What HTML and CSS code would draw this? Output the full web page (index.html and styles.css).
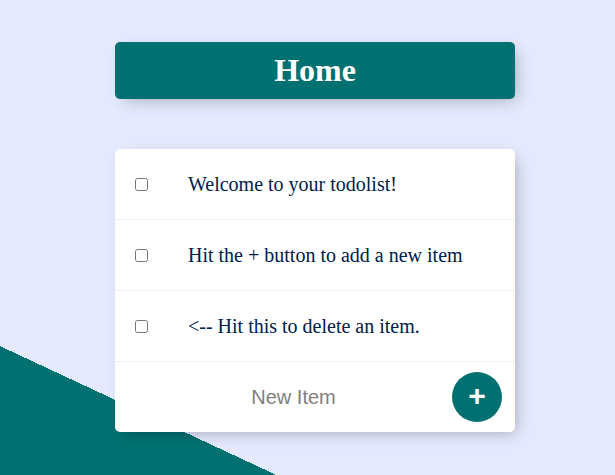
FILE: index.html
```html
<!DOCTYPE html>
<html lang="en">
<head>
<meta charset="utf-8">
<title>To Do List</title>
<link rel="stylesheet" href="styles.css">
</head>
<body>
  <div class="page">
    <div class="box heading">
      <h1 class="title">Home</h1>
    </div>
    <div class="box list">
      <div class="item">
        <input class="check" type="checkbox">
        <p class="text">Welcome to your todolist!</p>
      </div>
      <div class="item">
        <input class="check" type="checkbox">
        <p class="text">Hit the + button to add a new item</p>
      </div>
      <div class="item">
        <input class="check" type="checkbox">
        <p class="text">&lt;-- Hit this to delete an item.</p>
      </div>
      <form class="item new-form">
        <input class="new-input" type="text" name="newItem" placeholder="New Item" autocomplete="off">
        <button class="add-btn" type="button">+</button>
      </form>
    </div>
  </div>
</body>
</html>
```
FILE: styles.css
```css
html {
  background-color: #E4E9FD;
  background-image: linear-gradient(25deg, #007070 50%, #E4E9FD 50%);
  background-size: 615px 979px;
  background-repeat: no-repeat;
  background-position: 0 0;
  font-family: "Liberation Serif", "Times New Roman", serif;
}

body {
  margin: 0;
}

.page {
  padding: 42px 0 0 15px;
}

.box {
  max-width: 400px;
  margin: 0 auto 50px;
  background: #fff;
  border-radius: 5px;
  box-shadow: 5px 5px 15px -5px rgba(0, 0, 0, 0.3);
}

.heading {
  background-color: #007070;
  text-align: center;
}

.title {
  margin: 0;
  padding: 10px;
  color: #fff;
  font-size: 32px;
  font-weight: bold;
}

.item {
  min-height: 70px;
  display: flex;
  align-items: center;
  border-bottom: 1px solid #F1F1F1;
}

.item:last-child {
  border-bottom: 0;
}

.check {
  margin: 20px;
  width: 13px;
  height: 13px;
}

.text {
  margin: 0;
  padding: 20px;
  font-size: 20px;
  font-weight: 200;
  color: #00204a;
}

.new-form {
  margin: 0 0 0 20px;
}

.new-input {
  text-align: center;
  height: 60px;
  border: none;
  background: transparent;
  font-family: "Liberation Sans", Arial, sans-serif;
  font-size: 20px;
  font-weight: 200;
  width: 313px;
  padding: 1px 2px;
  margin: 0;
}

.new-input::placeholder {
  color: grey;
  opacity: 1;
}

.new-input:focus {
  outline: none;
}

.add-btn {
  min-height: 50px;
  width: 50px;
  border-radius: 50%;
  border: 0;
  background-color: #007070;
  color: #fff;
  font-family: "Liberation Sans", Arial, sans-serif;
  font-size: 30px;
  font-weight: bold;
  padding: 0 0 3px;
  margin: 0;
  line-height: 1;
}
```
